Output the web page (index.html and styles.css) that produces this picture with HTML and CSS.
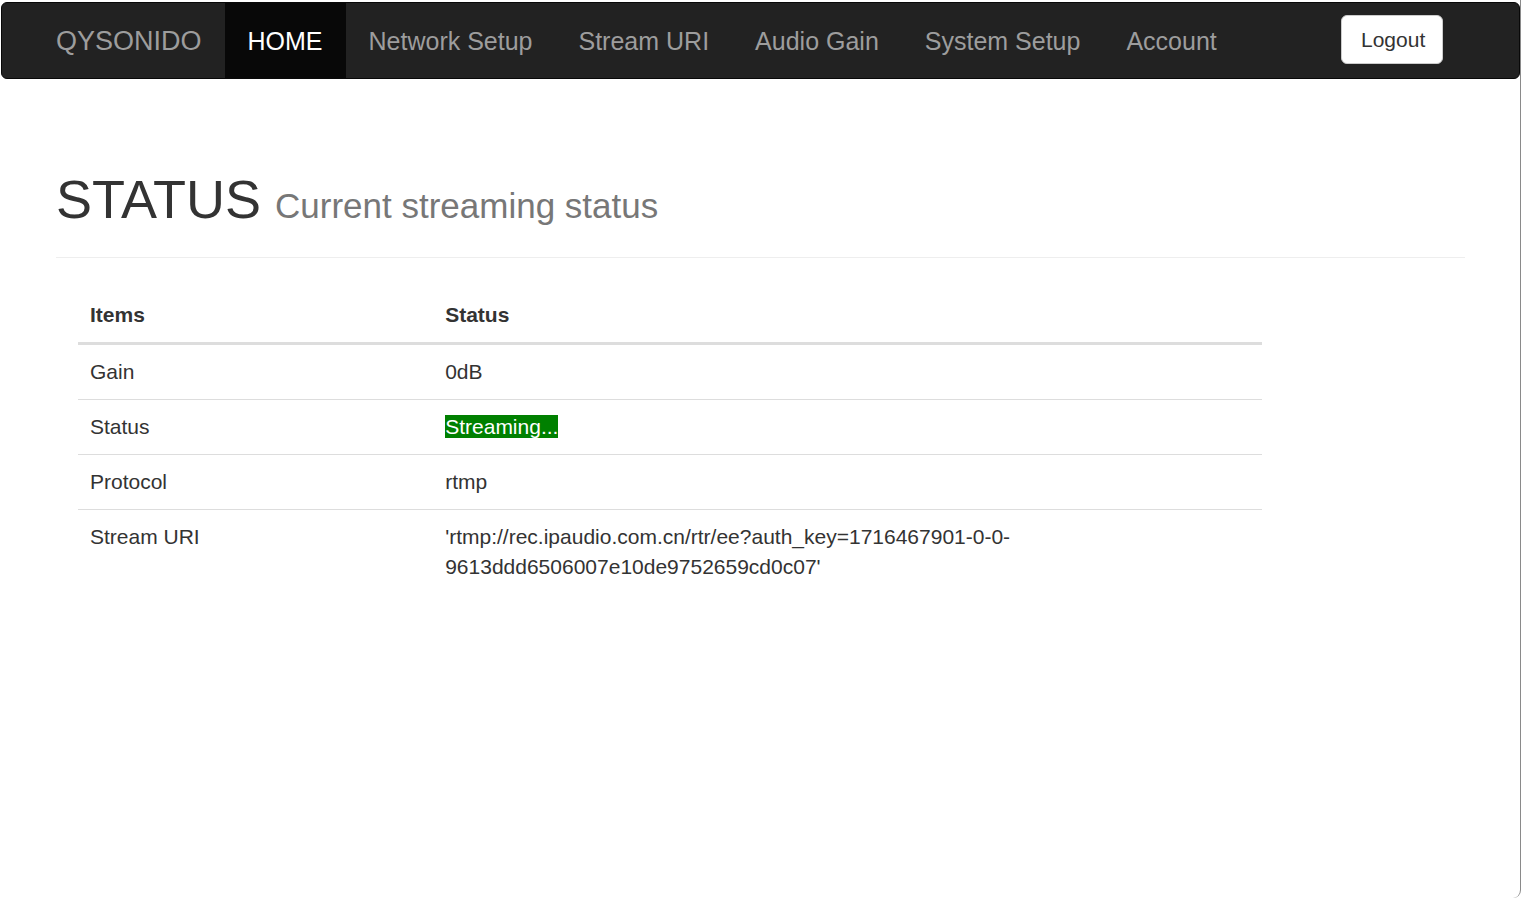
FILE: index.html
```html
<!DOCTYPE html>
<html lang="en">
<head>
  <meta charset="UTF-8">
  <meta name="viewport" content="width=device-width, initial-scale=1.0">
  <title>QYSONIDO - Home</title>
  <link rel="stylesheet" href="styles.css">
</head>
<body>
  <div class="window">

    <!-- Top navigation -->
    <nav class="navbar">
      <a class="brand" href="#">QYSONIDO</a>
      <ul class="nav">
        <li class="active"><a href="#">HOME</a></li>
        <li><a href="#">Network Setup</a></li>
        <li><a href="#">Stream URI</a></li>
        <li><a href="#">Audio Gain</a></li>
        <li><a href="#">System Setup</a></li>
        <li><a href="#">Account</a></li>
      </ul>
      <button class="btn-logout">Logout</button>
    </nav>

    <div class="main">
      <div class="page-header">
        <h1>STATUS <small>Current streaming status</small></h1>
      </div>

      <!-- Status table -->
      <table class="status-table">
        <thead>
          <tr>
            <th class="col-item">Items</th>
            <th>Status</th>
          </tr>
        </thead>
        <tbody>
          <tr>
            <td>Gain</td>
            <td>0dB</td>
          </tr>
          <tr>
            <td>Status</td>
            <td><span class="streaming">Streaming...</span></td>
          </tr>
          <tr>
            <td>Protocol</td>
            <td>rtmp</td>
          </tr>
          <tr>
            <td>Stream URI</td>
            <td>'rtmp://rec.ipaudio.com.cn/rtr/ee?auth_key=1716467901-0-0-9613ddd6506007e10de9752659cd0c07'</td>
          </tr>
        </tbody>
      </table>
    </div>

  </div>
</body>
</html>
```

FILE: styles.css
```css
/* Basic styling */
* {
  box-sizing: border-box;
}

html, body {
  margin: 0;
  background: #fff;
}

body {
  font-family: "Liberation Sans", Arial, sans-serif;
  font-size: 21px;
  line-height: 30px;
  color: #333;
}

.window {
  width: 1521px;
  min-height: 898px;
  border-right: 1px solid #8a8a8a;
  border-bottom-right-radius: 8px;
  overflow: hidden;
}

/* Navbar */
.navbar {
  display: flex;
  align-items: stretch;
  height: 77px;
  margin: 2px 0 0 1px;
  padding: 0 31px;
  background-color: #222;
  border: 1px solid #080808;
  border-radius: 6px;
}

.brand {
  display: flex;
  align-items: center;
  padding: 0 23px;
  font-size: 27px;
  color: #9d9d9d;
  text-decoration: none;
}

.nav {
  display: flex;
  margin: 0;
  padding: 0;
  list-style: none;
}

.nav li a {
  display: flex;
  align-items: center;
  height: 100%;
  padding: 0 23px;
  font-size: 25px;
  color: #9d9d9d;
  text-decoration: none;
}

.nav li.active a {
  color: #fff;
  background-color: #080808;
}

.btn-logout {
  align-self: center;
  margin: 0 45px 2px auto;
  width: 102px;
  height: 49px;
  padding: 0 19px;
  font-family: inherit;
  font-size: 21px;
  color: #333;
  background: #fff;
  border: 1px solid #ccc;
  border-radius: 6px;
}

/* Page content */
.main {
  padding: 0 55px 0 56px;
}

.page-header {
  margin: 91px 0 30px;
  padding-bottom: 28px;
  border-bottom: 1px solid #eee;
}

h1 {
  margin: 0;
  font-size: 54px;
  font-weight: 500;
  line-height: 59px;
}

h1 small {
  margin-left: -1px;
  font-size: 35px;
  font-weight: normal;
  line-height: 1;
  color: #777;
}

/* Table */
.status-table {
  width: 1184px;
  margin-left: 22px;
  border-collapse: collapse;
}

.status-table th,
.status-table td {
  padding: 12px;
  text-align: left;
  vertical-align: top;
}

.status-table th {
  border-bottom: 3px solid #ddd;
}

.status-table td {
  border-top: 1px solid #ddd;
}

.col-item {
  width: 30%;
}

.streaming {
  color: #fff;
  background-color: #008000;
}
```
